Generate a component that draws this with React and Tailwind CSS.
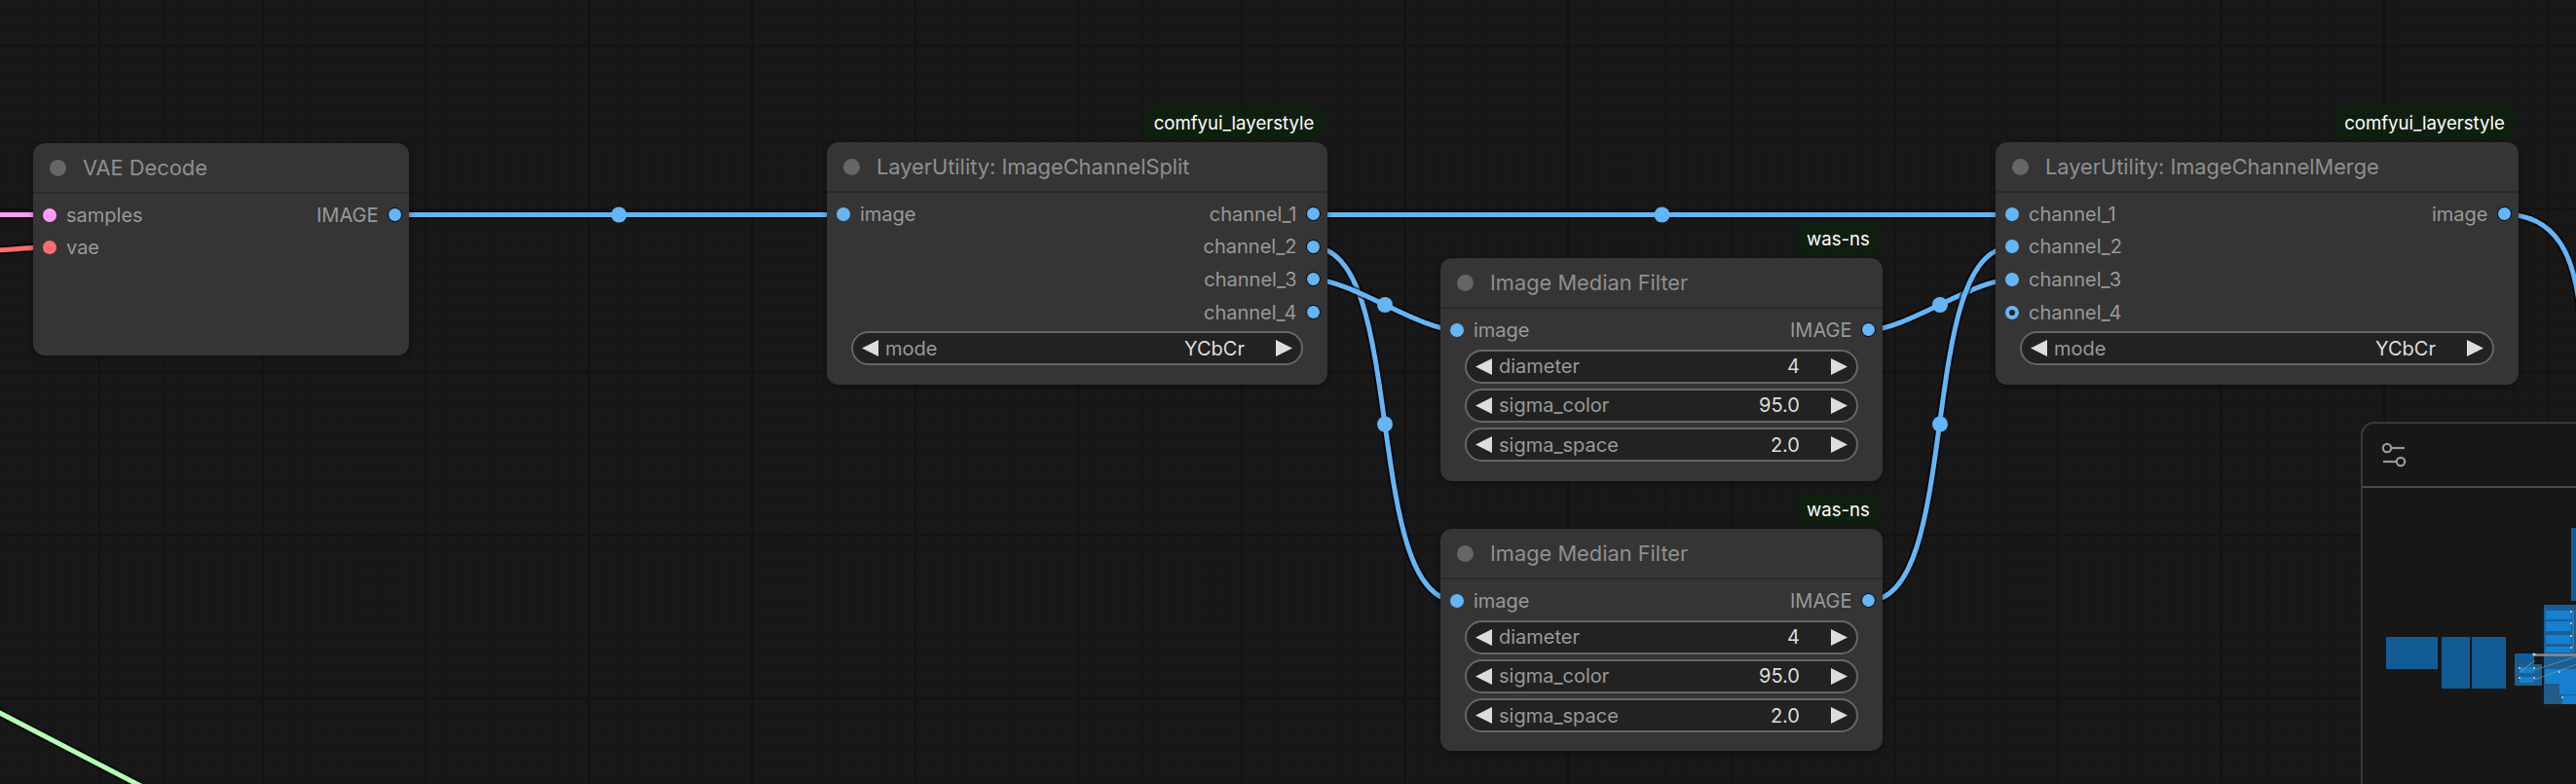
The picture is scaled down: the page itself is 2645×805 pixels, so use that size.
import React from 'react'

const LINK = '#64b5f6'

const links = [
  { d: 'M 405 220.5 L 866 220.5', color: LINK, mid: [635.5, 220.5] },
  { d: 'M 1348 220.5 L 2065 220.5', color: LINK, mid: [1706.5, 220.5] },
  { d: 'M 1348 254 C 1446 254 1398 617 1496 617', color: LINK, mid: [1422, 435.5] },
  { d: 'M 1348 287 C 1387 287 1457 339 1496 339', color: LINK, mid: [1422, 313] },
  { d: 'M 1918 339 C 1957 339 2026 287 2065 287', color: LINK, mid: [1992, 313] },
  { d: 'M 1918 617 C 2016 617 1967 254 2065 254', color: LINK, mid: [1992, 435.5] },
  { d: 'M 2570 220 C 2625 220 2645 262 2650 330', color: LINK },
  { d: 'M -10 220.5 L 51 220.5', color: '#ff9cf9' },
  { d: 'M -10 257.5 C 15 256 30 254 51 254', color: '#ff6e6e' },
  { d: 'M -10 727 L 160 815', color: '#b3ffb3' },
]

function Links() {
  return (
    <svg className="absolute inset-0" width="2645" height="805" viewBox="0 0 2645 805" fill="none">
      {links.map((l, i) => (
        <g key={i}>
          <path d={l.d} stroke="#000" strokeOpacity="0.6" strokeWidth="9" />
          <path d={l.d} stroke={l.color} strokeWidth="5" />
          {l.mid && <circle cx={l.mid[0]} cy={l.mid[1]} r="8" fill={l.color} />}
        </g>
      ))}
    </svg>
  )
}

function Arrow({ dir }) {
  return (
    <svg width="17" height="17" viewBox="0 0 17 17" className="shrink-0">
      <polygon points={dir === 'left' ? '0,8.5 17,0 17,17' : '17,8.5 0,0 0,17'} fill="#ddd" />
    </svg>
  )
}

function Widget({ label, value }) {
  return (
    <div className="flex h-[35px] items-center rounded-full border-2 border-[#666] bg-[#222] pl-[9px] pr-[9px] text-[20px]">
      <Arrow dir="left" />
      <span className="ml-[7px] text-[#999]">{label}</span>
      <span className="ml-auto mr-[32px] text-[#ddd]">{value}</span>
      <Arrow dir="right" />
    </div>
  )
}

function InputSlot({ label, color = LINK, hollow }) {
  return (
    <div className="flex h-[33.6px] items-center">
      {hollow ? (
        <span className="h-[14px] w-[14px] rounded-full border-[4px] border-[#64b5f6] bg-[#222]" />
      ) : (
        <span className={`h-[14px] w-[14px] rounded-full ${color}`} />
      )}
      <span className="ml-[10px] text-[#999]">{label}</span>
    </div>
  )
}

function OutputSlot({ label }) {
  return (
    <div className="flex h-[33.6px] items-center justify-end">
      <span className="mr-[9px] text-[#999]">{label}</span>
      <span className="h-[15px] w-[15px] rounded-full border-[1.5px] border-black bg-[#64b5f6]" />
    </div>
  )
}

function Badge({ className, children }) {
  return (
    <div className={`absolute flex h-[33px] items-center justify-center rounded-[8px] bg-[#0f1f0f] text-[18.6px] text-white ${className}`}>
      {children}
    </div>
  )
}

function Node({ className, title, inputs = [], outputs = [], widgets = [] }) {
  return (
    <div className={`absolute flex flex-col rounded-[12px] bg-[#353535] text-[20px] shadow-[0_2px_6px_rgba(0,0,0,0.4)] ${className}`}>
      <div className="flex h-[52px] shrink-0 items-center border-b-2 border-[#2b2b2b] pl-[17px] text-[21.8px] text-[#8f8f8f]">
        <span className="h-[17px] w-[17px] rounded-full bg-[#666]" />
        <span className="ml-[17px]">{title}</span>
      </div>
      <div className="flex justify-between pl-[10px] pr-[7.5px] pt-[5px]">
        <div className="flex flex-col">{inputs}</div>
        <div className="flex flex-col">{outputs}</div>
      </div>
      <div className="mt-[3px] flex flex-col gap-[5.3px] px-[25px]">
        {widgets.map((w) => (
          <Widget key={w.label} label={w.label} value={w.value} />
        ))}
      </div>
    </div>
  )
}

function MiniMap() {
  return (
    <div className="absolute left-[2424px] top-[433px] h-[420px] w-[320px] rounded-tl-[14px] border-2 border-[#3a3a3e] bg-[#171717]">
      <div className="flex h-[66px] items-center border-b-2 border-[#4a4a4a] pl-[18px]">
        <svg width="28" height="28" viewBox="0 0 28 28" fill="none" stroke="#999" strokeWidth="2.2">
          <circle cx="7" cy="7" r="4.2" />
          <path d="M11.5 7 H25" />
          <circle cx="21" cy="21" r="4.2" />
          <path d="M3 21 H16.5" />
        </svg>
      </div>
      <svg className="absolute left-[-2px] top-[-2px] blur-[0.6px]" width="222" height="300" viewBox="2424 433 222 300">
        <rect x="2450" y="654" width="53" height="33" fill="#125c96" />
        <rect x="2507" y="654" width="29" height="53" fill="#125c96" />
        <rect x="2538" y="654" width="35" height="53" fill="#125c96" />
        <rect x="2582" y="671" width="20" height="11" fill="#125c9a" />
        <rect x="2582" y="682" width="28" height="22" fill="#1d5f90" />
        <rect x="2587" y="685" width="15" height="6" fill="#1580d0" />
        <rect x="2587" y="695" width="15" height="6" fill="#1580d0" />
        <rect x="2640" y="542" width="6" height="75" fill="#125c96" />
        <rect x="2612" y="621" width="34" height="102" fill="#1a5f94" />
        <rect x="2614" y="627" width="26" height="9" fill="#1580d0" />
        <rect x="2614" y="638" width="26" height="10" fill="#1580d0" />
        <rect x="2614" y="652" width="26" height="9" fill="#1580d0" />
        <rect x="2614" y="664" width="26" height="6" fill="#1580d0" />
        <rect x="2613" y="687" width="15" height="15" fill="#1580d0" />
        <rect x="2628" y="687" width="18" height="26" fill="#1580d0" />
        <rect x="2631" y="714" width="15" height="9" fill="#1580d0" />
        <rect x="2613" y="702" width="15" height="21" fill="#235b88" />
        <path d="M2603 678 L2588 690 M2602 688 L2646 674 M2602 698 L2646 682 M2642 627 V670" stroke="#8fa3b3" strokeOpacity="0.6" strokeWidth="1" fill="none" />
        <path d="M2603 672.5 H2646" stroke="#8a8a8a" strokeWidth="2.5" />
        <g fill="#c8d4dc">
          <circle cx="2602" cy="672" r="1.6" />
          <circle cx="2587" cy="686" r="1" />
          <circle cx="2602" cy="686" r="1" />
          <circle cx="2587" cy="696" r="1" />
          <circle cx="2602" cy="696" r="1" />
          <circle cx="2640" cy="628" r="1" />
          <circle cx="2640" cy="640" r="1" />
          <circle cx="2640" cy="653" r="1" />
          <circle cx="2640" cy="665" r="1" />
          <circle cx="2628" cy="690" r="1" />
          <circle cx="2631" cy="716" r="1" />
        </g>
      </svg>
    </div>
  )
}

const blue = 'bg-[#64b5f6]'
const medianWidgets = [
  { label: 'diameter', value: '4' },
  { label: 'sigma_color', value: '95.0' },
  { label: 'sigma_space', value: '2.0' },
]

export default function App() {
  return (
    <div className="relative h-[805px] w-[2645px] overflow-hidden bg-[#181818] bg-[linear-gradient(to_right,#121212_2px,transparent_2px),linear-gradient(to_bottom,#131313_2px,transparent_2px),linear-gradient(to_right,#141414_1px,transparent_1px),linear-gradient(to_bottom,#141414_1px,transparent_1px)] bg-[size:167.6px_167.6px,167.6px_167.6px,16.76px_16.76px,16.76px_16.76px] bg-[position:101px_0,0_46px,0.4px_0,0_12.7px] font-[family-name:Inter,sans-serif]">
      <Links />

      <Node
        className="left-[34px] top-[147px] h-[218px] w-[386px]"
        title="VAE Decode"
        inputs={[
          <InputSlot key="samples" label="samples" color="bg-[#ff9cf9]" />,
          <InputSlot key="vae" label="vae" color="bg-[#ff6e6e]" />,
        ]}
        outputs={[<OutputSlot key="IMAGE" label="IMAGE" />]}
      />

      <Badge className="left-[1175px] top-[110px] w-[184px]">comfyui_layerstyle</Badge>
      <Node
        className="left-[849px] top-[146px] h-[249px] w-[514px]"
        title="LayerUtility: ImageChannelSplit"
        inputs={[<InputSlot key="image" label="image" color={blue} />]}
        outputs={['channel_1', 'channel_2', 'channel_3', 'channel_4'].map((c) => (
          <OutputSlot key={c} label={c} />
        ))}
        widgets={[{ label: 'mode', value: 'YCbCr' }]}
      />

      <Badge className="left-[1846px] top-[229px] w-[83px]">was-ns</Badge>
      <Node
        className="left-[1479px] top-[265px] h-[229px] w-[454px]"
        title="Image Median Filter"
        inputs={[<InputSlot key="image" label="image" color={blue} />]}
        outputs={[<OutputSlot key="IMAGE" label="IMAGE" />]}
        widgets={medianWidgets}
      />

      <Badge className="left-[1846px] top-[507px] w-[83px]">was-ns</Badge>
      <Node
        className="left-[1479px] top-[543px] h-[228px] w-[454px]"
        title="Image Median Filter"
        inputs={[<InputSlot key="image" label="image" color={blue} />]}
        outputs={[<OutputSlot key="IMAGE" label="IMAGE" />]}
        widgets={medianWidgets}
      />

      <Badge className="left-[2397px] top-[110px] w-[185px]">comfyui_layerstyle</Badge>
      <Node
        className="left-[2049px] top-[146px] h-[249px] w-[537px]"
        title="LayerUtility: ImageChannelMerge"
        inputs={[
          <InputSlot key="c1" label="channel_1" color={blue} />,
          <InputSlot key="c2" label="channel_2" color={blue} />,
          <InputSlot key="c3" label="channel_3" color={blue} />,
          <InputSlot key="c4" label="channel_4" hollow />,
        ]}
        outputs={[<OutputSlot key="image" label="image" />]}
        widgets={[{ label: 'mode', value: 'YCbCr' }]}
      />

      <MiniMap />
    </div>
  )
}
